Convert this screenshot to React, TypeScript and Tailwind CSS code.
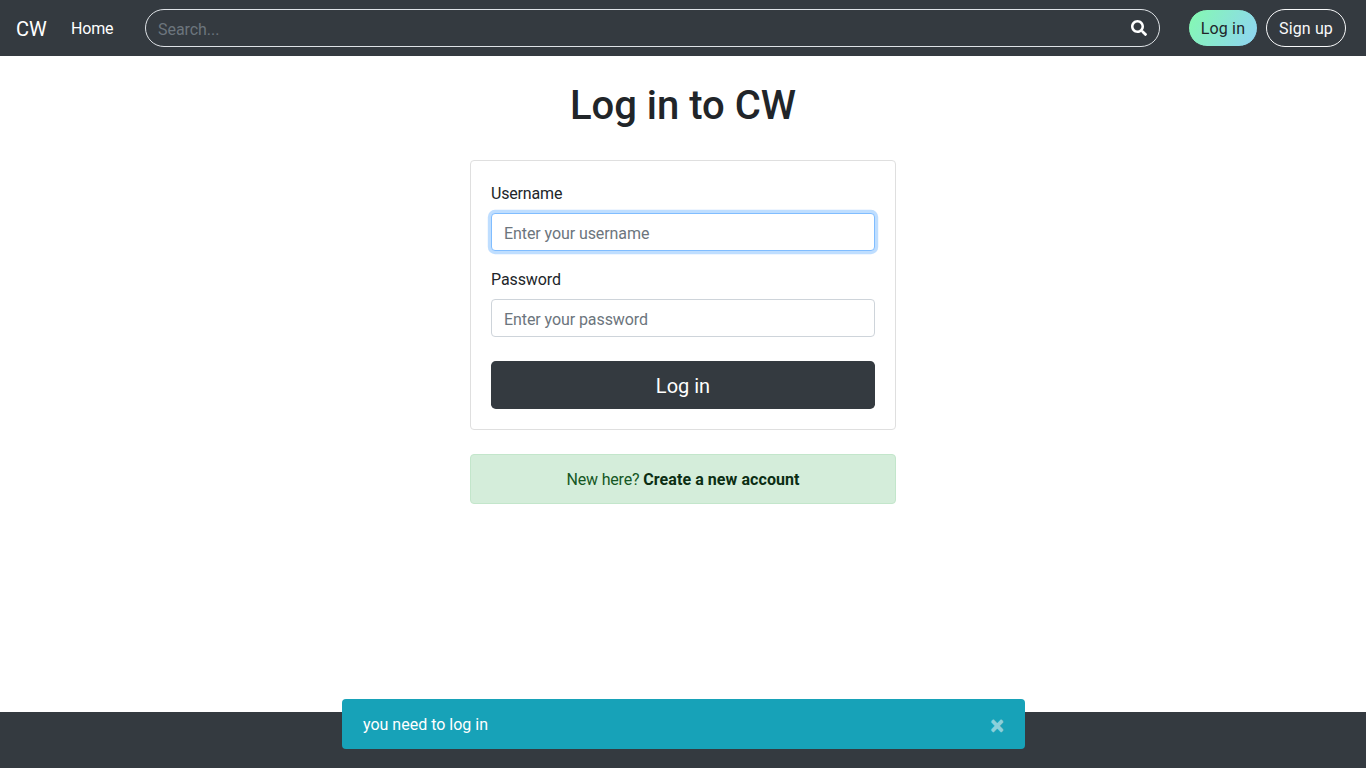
import { FaSearch } from "react-icons/fa";

const control =
  "block h-[38px] w-full rounded-[4px] border bg-white px-3 pt-[3px] text-base tracking-[-0.08px] text-[#495057] placeholder:text-[#6c757d] outline-none";

function Navbar() {
  return (
    <nav className="flex h-14 items-center bg-[#343a40] pl-4 pr-5 text-white">
      <a className="w-[55px] pt-[2px] text-xl leading-[30px]">CW</a>
      <a className="w-[74px] pt-[2px] text-base tracking-[-0.2px]">Home</a>
      <div className="flex h-[38px] w-[1015px] items-center rounded-full border border-[#dee2e6] pl-3 pr-3">
        <input
          className="min-w-0 flex-1 bg-transparent pt-[3px] text-base tracking-[-0.05px] outline-none placeholder:text-[#6c757d]"
          placeholder="Search..."
        />
        <FaSearch className="h-4 w-4" />
      </div>
      <div className="ml-auto flex items-center gap-2">
        <button className="h-[38px] w-[70px] rounded-full border border-[#343a40] bg-[linear-gradient(120deg,#84fab0_0%,#8fd3f4_100%)] pt-[2px] text-base tracking-[0.15px] text-[#212529]">
          Log in
        </button>
        <button className="h-[38px] w-20 rounded-full border border-[#f8f9fa] pt-[2px] text-base tracking-[0.14px] text-[#f8f9fa]">
          Sign up
        </button>
      </div>
    </nav>
  );
}

function LoginCard() {
  return (
    <form className="w-full rounded-[4px] border border-[#dfdfdf] bg-white p-5">
      <label className="mb-[7px] block pt-px leading-6 tracking-[-0.17px]">Username</label>
      <input
        className={`${control} border-[#80bdff] shadow-[0_0_0_3.2px_rgba(0,123,255,0.25)]`}
        placeholder="Enter your username"
      />
      <label className="mb-[7px] mt-4 block pt-px leading-6 tracking-[-0.1px]">Password</label>
      <input className={`${control} border-[#ced4da]`} placeholder="Enter your password" />
      <button
        type="button"
        className="mt-6 block h-12 w-full rounded-[4.8px] bg-[#343a40] pt-[2px] text-xl text-white"
      >
        Log in
      </button>
    </form>
  );
}

export default function App() {
  return (
    <div className="flex h-screen flex-col overflow-hidden bg-white font-['Roboto',sans-serif] text-base text-[#212529]">
      <Navbar />
      <main className="mx-auto flex w-[426px] flex-1 flex-col items-center pt-[26px]">
        <h1 className="mb-[30px] text-[40px] font-medium leading-[48px]">Log in to CW</h1>
        <LoginCard />
        <div className="mt-6 h-[50px] w-full rounded-[4px] border border-[#c3e6cb] bg-[#d4edda] pt-[13px] text-center leading-6 text-[#155724]">
          <span className="tracking-[-0.17px]">New here? </span>
          <a className="font-bold tracking-[0.07px] text-[#0b2e13]">Create a new account</a>
        </div>
      </main>
      <footer className="h-14 bg-[#343a40]" />
      <div className="absolute bottom-[19px] left-[342px] flex h-[50px] w-[683px] items-center justify-between rounded-[4px] bg-[#17a2b8] px-[21px] pt-[2px] text-white">
        <span>you need to log in</span>
        <button className="text-[26px] font-bold leading-6 text-white opacity-50 [text-shadow:0_1px_0_#fff]">×</button>
      </div>
    </div>
  );
}
